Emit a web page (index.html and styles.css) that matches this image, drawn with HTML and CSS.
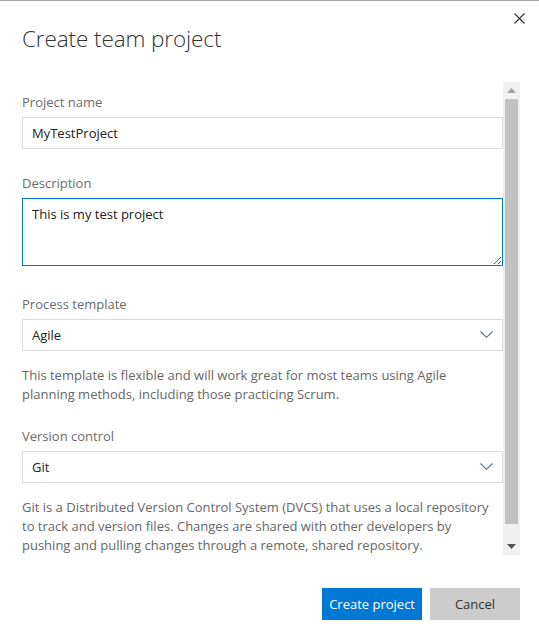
FILE: index.html
```html
<!DOCTYPE html>
<html lang="en">
<head>
<meta charset="utf-8">
<title>Create team project</title>
<link rel="stylesheet" href="styles.css">
</head>
<body>
<div class="dialog">
  <div class="header">
    <h1 class="title">Create team project</h1>
    <button class="close" aria-label="Close">
      <svg width="11" height="11" viewBox="0 0 11 11"><path d="M0.5 0.5 L10.5 10.5 M10.5 0.5 L0.5 10.5" stroke="#333" stroke-width="1.1" fill="none"/></svg>
    </button>
  </div>
  <div class="body">
    <div class="content">
      <div class="field">
        <label class="label">Project name</label>
        <input class="input" type="text" value="MyTestProject">
      </div>
      <div class="field field-desc">
        <label class="label">Description</label>
        <textarea class="textarea">This is my test project</textarea>
      </div>
      <div class="field field-process">
        <label class="label">Process template</label>
        <div class="select">
          <span>Agile</span>
          <svg class="chev" width="13" height="7" viewBox="0 0 13 7"><path d="M0.5 0.5 L6.5 6.3 L12.5 0.5" stroke="#5a6e86" stroke-width="1.1" fill="none"/></svg>
        </div>
        <p class="help">This template is flexible and will work great for most teams using Agile planning methods, including those practicing Scrum.</p>
      </div>
      <div class="field">
        <label class="label">Version control</label>
        <div class="select">
          <span>Git</span>
          <svg class="chev" width="13" height="7" viewBox="0 0 13 7"><path d="M0.5 0.5 L6.5 6.3 L12.5 0.5" stroke="#4a72a8" stroke-width="1.1" fill="none"/></svg>
        </div>
        <p class="help">Git is a Distributed Version Control System (DVCS) that uses a local repository to track and version files. Changes are shared with other developers by pushing and pulling changes through a remote, shared repository.</p>
      </div>
    </div>
    <div class="scrollbar">
      <div class="sb-btn"><svg width="9" height="5" viewBox="0 0 9 5"><path d="M4.5 0 L9 5 L0 5 Z" fill="#a3a3a3"/></svg></div>
      <div class="sb-track"><div class="sb-thumb"></div></div>
      <div class="sb-btn"><svg width="9" height="5" viewBox="0 0 9 5"><path d="M0 0 L9 0 L4.5 5 Z" fill="#505050"/></svg></div>
    </div>
  </div>
  <div class="footer">
    <button class="btn btn-primary">Create project</button>
    <button class="btn btn-secondary">Cancel</button>
  </div>
</div>
</body>
</html>
```

FILE: styles.css
```css
html, body {
  margin: 0;
  padding: 0;
  background: #fff;
}
.dialog {
  width: 539px;
  height: 636px;
  box-sizing: border-box;
  border-top: 1px solid #a6a6a6;
  display: flex;
  flex-direction: column;
  font-family: "Open Sans", "Noto Sans", sans-serif;
  color: #333;
  background: #fff;
}
.header {
  display: flex;
  justify-content: space-between;
  align-items: flex-start;
  height: 81px;
  padding: 0 13px 0 22px;
}
.title {
  margin: 23px 0 0 0;
  font-size: 22.5px;
  line-height: 30px;
  font-weight: 300;
  color: #333;
  letter-spacing: -0.1px;
}
.close {
  margin-top: 10px;
  width: 14px;
  height: 14px;
  padding: 0;
  border: none;
  background: transparent;
  display: flex;
  align-items: center;
  justify-content: center;
}
.body {
  display: flex;
  height: 473px;
  padding-left: 22px;
  padding-right: 19px;
}
.content {
  flex: 1;
  overflow: hidden;
  padding-top: 10px;
}
.field {
  margin-bottom: 24px;
}
.field-desc {
  margin-bottom: 28px;
}
.field-process {
  margin-bottom: 22px;
}
.label {
  display: block;
  font-size: 13px;
  line-height: 20px;
  color: #6b6b6b;
  margin-bottom: 5px;
}
.input, .textarea {
  display: block;
  box-sizing: border-box;
  width: 100%;
  margin: 0;
  font-family: "Open Sans", "Noto Sans", sans-serif;
  font-size: 13px;
  color: #222;
  outline: none;
}
.input {
  height: 32px;
  border: 1px solid #dcdcdc;
  padding: 0 9px;
  line-height: 30px;
}
.textarea {
  height: 68px;
  border: 1px solid #0078d4;
  padding: 5px 9px;
  line-height: 20px;
  resize: both;
}
.select {
  box-sizing: border-box;
  height: 32px;
  border: 1px solid #dcdcdc;
  padding: 0 9px 0 9px;
  display: flex;
  align-items: center;
  justify-content: space-between;
  font-size: 13px;
  color: #222;
}
.chev {
  margin-top: -1px;
}
.help {
  margin: 15px 10px 0 0;
  font-size: 13px;
  line-height: 19px;
  color: #666;
}
.scrollbar {
  width: 17px;
  background: #f0f0f0;
  display: flex;
  flex-direction: column;
}
.sb-btn {
  height: 17px;
  display: flex;
  align-items: center;
  justify-content: center;
}
.sb-track {
  flex: 1;
  display: flex;
  flex-direction: column;
}
.sb-thumb {
  height: 425px;
  margin: 0 2px;
  background: #c1c1c1;
}
.footer {
  display: flex;
  justify-content: flex-end;
  gap: 8px;
  padding: 33px 19px 0 0;
}
.btn {
  height: 32px;
  border: none;
  font-family: "Open Sans", "Noto Sans", sans-serif;
  font-size: 13px;
  padding: 0 7px;
  cursor: pointer;
}
.btn-primary {
  background: #0078d4;
  color: #fff;
  min-width: 99px;
}
.btn-secondary {
  background: #cccccc;
  color: #333;
  min-width: 90px;
}
```
